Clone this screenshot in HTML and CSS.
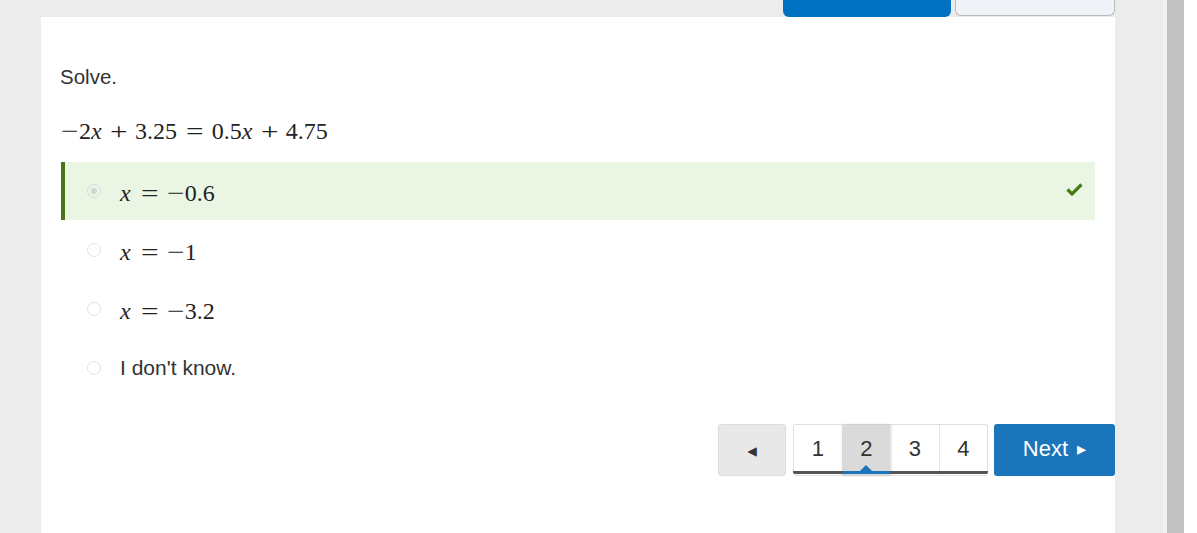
FILE: index.html
```html
<!DOCTYPE html>
<html>
<head>
<meta charset="utf-8">
<link rel="stylesheet" href="styles.css">
</head>
<body>
<div class="shell">
  <div class="page">
    <div class="topbar">
      <div class="tb-btn tb-primary"></div>
      <div class="tb-btn tb-secondary"></div>
    </div>
    <div class="card">
      <p class="prompt">Solve.</p>
      <div class="math eq">
        <span class="op neg">−</span><span>2</span><i>x</i><span class="op bin">+</span><span>3.25</span><span class="op rel">=</span><span>0.5</span><i>x</i><span class="op bin">+</span><span>4.75</span>
      </div>
      <ul class="options">
        <li class="option correct">
          <span class="radio checked"></span>
          <span class="math"><i>x</i><span class="op rel">=</span><span class="op neg">−</span><span>0.6</span></span>
          <svg class="check" width="17" height="13" viewBox="0 0 17 13"><path d="M1.5 6.5 L6 11 L15.5 1.5" fill="none" stroke="#4a7a14" stroke-width="3.2"/></svg>
        </li>
        <li class="option">
          <span class="radio"></span>
          <span class="math"><i>x</i><span class="op rel">=</span><span class="op neg">−</span><span>1</span></span>
        </li>
        <li class="option">
          <span class="radio"></span>
          <span class="math"><i>x</i><span class="op rel">=</span><span class="op neg">−</span><span>3.2</span></span>
        </li>
        <li class="option">
          <span class="radio"></span>
          <span class="text">I don't know.</span>
        </li>
      </ul>
      <div class="pager">
        <button class="prev">◂</button>
        <div class="pages">
          <span class="pg">1</span>
          <span class="pg active">2</span>
          <span class="pg">3</span>
          <span class="pg">4</span>
        </div>
        <button class="next">Next<span class="arr">▸</span></button>
      </div>
    </div>
  </div>
  <div class="track"></div>
  <div class="edge"></div>
</div>
</body>
</html>
```

FILE: styles.css
```css
html, body {
  margin: 0;
  padding: 0;
  height: 100%;
  overflow: hidden;
}
body {
  background: #ececec;
  font-family: "Liberation Sans", Arial, sans-serif;
  color: #333;
}
.shell {
  display: flex;
  height: 533px;
}
.page {
  width: 1167px;
  flex: none;
  padding-left: 41px;
  padding-right: 48px;
  box-sizing: border-box;
  display: flex;
  flex-direction: column;
  border-right: 4px solid #f1f1f1;
}
.track {
  width: 17px;
  flex: none;
  background: #c1c1c1;
}
.edge {
  flex: 1;
  background: #fff;
}
.topbar {
  height: 17px;
  display: flex;
  justify-content: flex-end;
  align-items: flex-start;
  gap: 4px;
}
.tb-btn {
  box-sizing: border-box;
  border-radius: 0 0 6px 6px;
}
.tb-primary {
  width: 168px;
  height: 17px;
  background: #0070c0;
}
.tb-secondary {
  width: 160px;
  height: 16px;
  background: #f0f3f8;
  border: 1px solid #b9b9b9;
  border-top: none;
}
.card {
  flex: 1;
  background: #fff;
  padding: 0 20px;
}
.prompt {
  margin: 0;
  padding-top: 48px;
  font-size: 20.5px;
  line-height: 24px;
  color: #333;
  margin-left: -1px;
}
.math {
  font-family: "Liberation Serif", "Times New Roman", serif;
  font-size: 24px;
  color: #222;
  white-space: nowrap;
}
.math i {
  font-style: italic;
  margin-right: 0.06em;
}
.math .op {
  display: inline-block;
  transform: scaleX(1.3);
  width: 0.73em;
  text-align: center;
}
.math .neg {
  margin-right: 0.02em;
}
.math .bin {
  margin: 0 0.3em;
}
.math .rel {
  margin: 0 0.36em;
}
.eq {
  margin-top: 29px;
  line-height: 26px;
}
.options {
  list-style: none;
  margin: 18px 0 0;
  padding: 0;
  display: flex;
  flex-direction: column;
  gap: 1px;
}
.option {
  height: 58px;
  display: flex;
  align-items: center;
  padding-left: 22px;
  border-left: 4px solid transparent;
  box-sizing: border-box;
}
.option.correct {
  background: #eaf5e4;
  border-left-color: #4a7418;
  padding-right: 12px;
}
.radio {
  width: 12px;
  height: 12px;
  border: 1px solid #e2e2e2;
  border-radius: 50%;
  box-sizing: content-box;
  margin-right: 19px;
  margin-top: -1px;
  position: relative;
  flex: none;
}
.radio.checked {
  border-color: #d8ded4;
  background: #eef3ea;
}
.radio.checked::after {
  content: "";
  position: absolute;
  left: 3px;
  top: 3px;
  width: 6px;
  height: 6px;
  border-radius: 50%;
  background: #d3d8d0;
}
.option .math {
  margin-top: 4px;
}
.check {
  margin-left: auto;
  margin-top: -4px;
}
.text {
  font-size: 21px;
  color: #333;
}
.pager {
  display: flex;
  justify-content: flex-end;
  margin-top: 27px;
  margin-right: -20px;
  height: 52px;
}
.prev {
  width: 68px;
  height: 52px;
  background: #e8e8e8;
  border: 1px solid #dcdcdc;
  border-radius: 3px;
  font-size: 19px;
  color: #333;
  padding: 0;
  font-family: "DejaVu Sans", sans-serif;
}
.pages {
  margin-left: 7px;
  display: flex;
  width: 195px;
  height: 52px;
  box-sizing: border-box;
  border: 1px solid #dedede;
  border-radius: 3px;
  background: #fff;
  position: relative;
}
.pages::after {
  content: "";
  position: absolute;
  left: -1px;
  right: -1px;
  bottom: 1px;
  height: 3px;
  background: #555;
  border-radius: 0 0 2px 2px;
}
.pg {
  flex: 1;
  display: flex;
  align-items: center;
  justify-content: center;
  font-size: 22px;
  color: #333;
  padding-bottom: 2px;
  border-right: 1px solid #e4e4e4;
  position: relative;
}
.pg:last-child {
  border-right: none;
}
.pg.active {
  background: #dadada;
  box-shadow: 0 0 3px rgba(0,0,0,0.15);
}
.pg.active::after {
  content: "";
  position: absolute;
  left: 0;
  right: 0;
  bottom: 1px;
  height: 3px;
  background: #1b75bb;
  z-index: 2;
}
.pg.active::before {
  content: "";
  position: absolute;
  left: 50%;
  margin-left: -6px;
  bottom: 4px;
  border-left: 6px solid transparent;
  border-right: 6px solid transparent;
  border-bottom: 6px solid #1b75bb;
}
.next {
  margin-left: 6px;
  width: 121px;
  height: 52px;
  background: #1b75bb;
  color: #fff;
  border: none;
  border-radius: 3px;
  font-family: "Liberation Sans", Arial, sans-serif;
  font-size: 22px;
  padding: 0 0 2px;
}
.next .arr {
  font-family: "DejaVu Sans", sans-serif;
  font-size: 18px;
  vertical-align: 1px;
  margin-left: 9px;
}
```
